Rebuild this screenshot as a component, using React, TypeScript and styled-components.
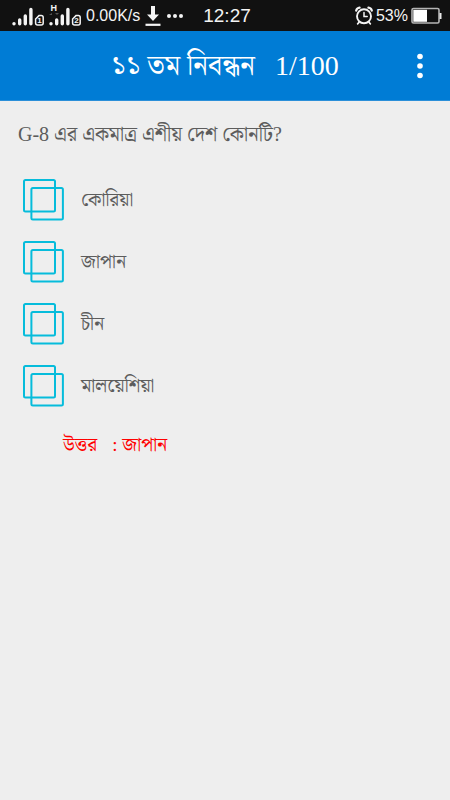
import React, { useState } from "react";
import styled, { createGlobalStyle } from "styled-components";

const serif = `"Liberation Serif", "Noto Serif Bengali", "Noto Serif", serif`;

const GlobalStyle = createGlobalStyle`
  *, *::before, *::after { box-sizing: border-box; }
  body { margin: 0; background: #eeeeee; }
`;

const Screen = styled.div`
  min-height: 100vh;
  display: flex;
  flex-direction: column;
  background: #eeeeee;
  font-family: ${serif};
`;

const StatusBar = styled.div`
  height: 31px;
  padding: 0 8px 0 12px;
  display: grid;
  grid-template-columns: 1fr auto 1fr;
  align-items: center;
  background: #111111;
  color: #f4f4f4;
  font-family: "Liberation Sans", sans-serif;
  white-space: nowrap;
`;

const StatusGroup = styled.div<{ $end?: boolean }>`
  display: flex;
  align-items: center;
  gap: ${(p) => (p.$end ? 3 : 5)}px;
  min-width: 0;
  justify-content: ${(p) => (p.$end ? "flex-end" : "flex-start")};
  svg { flex: none; }
`;

const StatusText = styled.span<{ $size: number }>`
  font-size: ${(p) => p.$size}px;
  line-height: 32px;
`;

const AppBar = styled.header`
  height: 70px;
  padding: 0 8px 0 52px;
  display: flex;
  align-items: center;
  background: #007cd5;
  color: #ffffff;
  border-bottom: 1px solid #2b8fd9;
`;

const Title = styled.h1`
  flex: 1;
  margin: 0;
  display: flex;
  justify-content: center;
  align-items: baseline;
  gap: 20px;
  font-size: 28px;
  line-height: 40px;
  font-weight: 400;
`;

const MenuButton = styled.button`
  width: 44px;
  height: 48px;
  padding: 0;
  border: 0;
  background: none;
  color: inherit;
  display: grid;
  place-items: center;
  cursor: pointer;
`;

const Quiz = styled.main`
  padding: 18px;
`;

const Choices = styled.fieldset`
  margin: 0;
  padding: 0;
  border: 0;
  min-width: 0;
`;

const Question = styled.legend`
  padding: 0;
  margin-bottom: 20px;
  font-size: 20px;
  line-height: 30px;
  color: #5c5c5c;
`;

const Choice = styled.label`
  height: 62px;
  padding-left: 4px;
  display: flex;
  align-items: center;
  gap: 17px;
  font-size: 19px;
  line-height: 30px;
  color: #5c5c5c;
  cursor: pointer;
`;

const Tick = styled.input`
  position: absolute;
  opacity: 0;
  width: 42px;
  height: 42px;
  margin: 0;
  cursor: pointer;
`;

const Answer = styled.p`
  margin: 13px 0 0;
  padding-left: 45px;
  display: flex;
  gap: 15px;
  font-size: 19px;
  line-height: 30px;
  color: #ff0000;
`;

function Signal({ sim, network }: { sim: number; network?: string }) {
  return (
    <svg width="32" height="26" viewBox="0 0 32 26" aria-hidden="true">
      <g stroke="#f4f4f4" strokeWidth="3.4" strokeLinecap="round">
        <path d="M2 20.6v.2M7.7 17v3.8M13.3 13v7.8M18.9 6.4v14.4" />
      </g>
      <path d="M27 12.6h2.2q2 0 2 2v5.4q0 2-2 2h-3.6q-2 0-2-2v-4z" fill="none" stroke="#f4f4f4" strokeWidth="1.5" />
      <text x="27.5" y="20.4" fontSize="8" fontWeight="700" textAnchor="middle" fill="#f4f4f4">{sim}</text>
      {network && (
        <>
          <text x="4.8" y="7.8" fontSize="9" fontWeight="700" textAnchor="middle" fill="#f4f4f4">{network}</text>
          <path d="M0 12l3-2v2zM6 10h4l-2 2z" fill="#555555" />
        </>
      )}
    </svg>
  );
}

function Download() {
  return (
    <svg width="16" height="22" viewBox="0 0 16 22" aria-hidden="true">
      <path d="M6 1h4v8.5h4L8 16 2 9.5h4z" fill="#f4f4f4" />
      <path d="M.5 19.8h15" stroke="#f4f4f4" strokeWidth="2.2" />
    </svg>
  );
}

function Dots() {
  return (
    <svg width="18" height="6" viewBox="0 0 18 6" aria-hidden="true" fill="#f4f4f4">
      <circle cx="3" cy="3" r="2" />
      <circle cx="9" cy="3" r="2" />
      <circle cx="15" cy="3" r="2" />
    </svg>
  );
}

function Alarm() {
  return (
    <svg width="18" height="20" viewBox="0 0 18 20" aria-hidden="true" fill="none" stroke="#f4f4f4" strokeLinecap="round">
      <circle cx="9" cy="10.3" r="7" strokeWidth="1.9" />
      <path d="M9 6.5v4h3.2" strokeWidth="1.5" />
      <path d="M1.2 4.6Q1.8 2 4.6 1.7M16.8 4.6Q16.2 2 13.4 1.7" strokeWidth="2.2" />
      <path d="M4 16.4l-1.4 1.5M14 16.4l1.4 1.5" strokeWidth="1.6" />
    </svg>
  );
}

function Battery() {
  return (
    <svg width="31" height="18" viewBox="0 0 31 18" aria-hidden="true">
      <rect x="1" y="1.5" width="27" height="14.5" rx="1.5" fill="none" stroke="#b5b5b5" strokeWidth="1.6" />
      <rect x="2.3" y="2.8" width="13.7" height="12" fill="#ffffff" />
      <path d="M29.5 6v6" stroke="#e8e8e8" strokeWidth="2" />
    </svg>
  );
}

function Squares({ filled }: { filled: boolean }) {
  return (
    <svg width="42" height="42" viewBox="0 0 42 42" aria-hidden="true" fill="none" stroke="#06bcdb" strokeWidth="2">
      <rect x="2" y="1" width="31" height="31.5" rx="1.5" />
      <rect x="9.4" y="9" width="31.5" height="31.5" rx="1.5" fill={filled ? "#06bcdb" : "none"} />
    </svg>
  );
}

const options = ["কোরিয়া", "জাপান", "চীন", "মালয়েশিয়া"];

export default function App() {
  const [picked, setPicked] = useState<string[]>([]);
  const toggle = (name: string) =>
    setPicked((now) => (now.includes(name) ? now.filter((n) => n !== name) : [...now, name]));

  return (
    <Screen>
      <GlobalStyle />
      <StatusBar>
        <StatusGroup>
          <Signal sim={1} />
          <Signal sim={2} network="H" />
          <StatusText $size={16}>0.00K/s</StatusText>
          <Download />
          <Dots />
        </StatusGroup>
        <StatusText $size={19}>12:27</StatusText>
        <StatusGroup $end>
          <Alarm />
          <StatusText $size={16}>53%</StatusText>
          <Battery />
        </StatusGroup>
      </StatusBar>
      <AppBar>
        <Title>
          <span>১১ তম নিবন্ধন</span>
          <span>1/100</span>
        </Title>
        <MenuButton type="button" aria-label="Menu">
          <svg width="6" height="26" viewBox="0 0 6 26" fill="currentColor" aria-hidden="true">
            <circle cx="3" cy="3.5" r="2.8" />
            <circle cx="3" cy="13" r="2.8" />
            <circle cx="3" cy="22.5" r="2.8" />
          </svg>
        </MenuButton>
      </AppBar>
      <Quiz>
        <Choices>
          <Question>G-8 এর একমাত্র এশীয় দেশ কোনটি?</Question>
          {options.map((name) => (
            <Choice key={name}>
              <Tick type="checkbox" checked={picked.includes(name)} onChange={() => toggle(name)} />
              <Squares filled={picked.includes(name)} />
              {name}
            </Choice>
          ))}
        </Choices>
        <Answer>
          <span>উত্তর</span>
          <span>: জাপান</span>
        </Answer>
      </Quiz>
    </Screen>
  );
}
